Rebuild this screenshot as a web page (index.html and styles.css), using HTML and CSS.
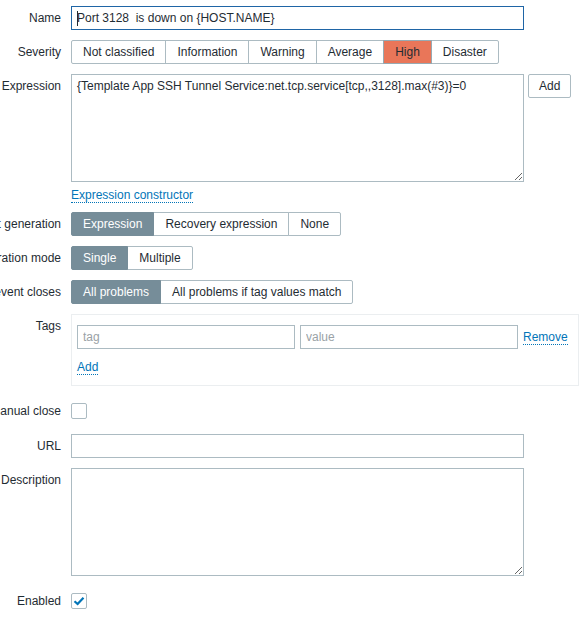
FILE: index.html
```html
<!DOCTYPE html>
<html lang="en">
<head>
<meta charset="utf-8">
<title>Trigger</title>
<link rel="stylesheet" href="styles.css">
</head>
<body>
<form class="form">
  <div class="row">
    <label class="label" for="name">Name</label>
    <div class="field">
      <span class="input-wrap">
        <input id="name" class="input input-focus" type="text" value="Port 3128  is down on {HOST.NAME}">
        <span class="caret"></span>
      </span>
    </div>
  </div>

  <div class="row">
    <div class="label">Severity</div>
    <div class="field">
      <div class="radio-list">
        <span class="radio">Not classified</span>
        <span class="radio">Information</span>
        <span class="radio">Warning</span>
        <span class="radio">Average</span>
        <span class="radio radio-high">High</span>
        <span class="radio">Disaster</span>
      </div>
    </div>
  </div>

  <div class="row">
    <label class="label" for="expr">Expression</label>
    <div class="field">
      <div class="expr-line">
        <textarea id="expr" class="textarea">{Template App SSH Tunnel Service:net.tcp.service[tcp,,3128].max(#3)}=0</textarea>
        <button type="button" class="btn-alt">Add</button>
      </div>
      <div class="link-line"><a class="link" href="#">Expression constructor</a></div>
    </div>
  </div>

  <div class="row">
    <div class="label">OK event generation</div>
    <div class="field">
      <div class="radio-list">
        <span class="radio radio-on">Expression</span>
        <span class="radio">Recovery expression</span>
        <span class="radio">None</span>
      </div>
    </div>
  </div>

  <div class="row">
    <div class="label">PROBLEM event generation mode</div>
    <div class="field">
      <div class="radio-list">
        <span class="radio radio-on">Single</span>
        <span class="radio">Multiple</span>
      </div>
    </div>
  </div>

  <div class="row">
    <div class="label">OK event closes</div>
    <div class="field">
      <div class="radio-list">
        <span class="radio radio-on">All problems</span>
        <span class="radio">All problems if tag values match</span>
      </div>
    </div>
  </div>

  <div class="row">
    <div class="label">Tags</div>
    <div class="field">
      <div class="tags-box">
        <div class="tag-line">
          <input class="input input-tag" type="text" placeholder="tag">
          <input class="input input-tag" type="text" placeholder="value">
          <a class="link" href="#">Remove</a>
        </div>
        <div class="tag-add"><a class="link" href="#">Add</a></div>
      </div>
    </div>
  </div>

  <div class="row row-check">
    <div class="label">Allow manual close</div>
    <div class="field">
      <span class="checkbox"></span>
    </div>
  </div>

  <div class="row">
    <label class="label" for="url">URL</label>
    <div class="field">
      <input id="url" class="input" type="text">
    </div>
  </div>

  <div class="row">
    <label class="label" for="desc">Description</label>
    <div class="field">
      <textarea id="desc" class="textarea textarea-solo"></textarea>
    </div>
  </div>

  <div class="row row-check">
    <div class="label">Enabled</div>
    <div class="field">
      <span class="checkbox">
        <svg width="12" height="10" viewBox="0 0 12 10" aria-hidden="true">
          <path d="M1.5 5.2 L4.6 8 L10.5 1.8" fill="none" stroke="#0275b8" stroke-width="2.2"/>
        </svg>
      </span>
    </div>
  </div>
</form>
</body>
</html>
```

FILE: styles.css
```css
html, body {
  margin: 0;
  padding: 0;
  background: #fff;
}

body {
  font-family: "Liberation Sans", Arial, sans-serif;
  font-size: 12px;
  line-height: 14px;
  color: #1f2c33;
  padding-top: 6px;
  overflow: hidden;
}

.form {
  display: flex;
  flex-direction: column;
}

.row {
  display: flex;
  align-items: flex-start;
  margin-bottom: 10px;
}

.row-check {
  padding: 3px 0 1px;
}

.label {
  flex: 0 0 61px;
  width: 61px;
  display: flex;
  justify-content: flex-end;
  white-space: nowrap;
  line-height: 24px;
  margin-right: 10px;
}

.field {
  flex: 0 0 auto;
}

/* text inputs */
.input-wrap {
  position: relative;
  display: block;
}

.caret {
  position: absolute;
  left: 6px;
  top: 5px;
  width: 1px;
  height: 15px;
  background: #1f2c33;
}

.input {
  display: block;
  box-sizing: border-box;
  width: 453px;
  height: 24px;
  margin: 0;
  padding: 0 5px;
  border: 1px solid #acbbc2;
  border-radius: 0;
  background: #fff;
  font: inherit;
  color: #1f2c33;
  outline: none;
}

.input::placeholder {
  color: #9aa2a6;
}

.input-focus {
  border-color: #1f65a6;
}

/* segmented radio buttons */
.radio-list {
  display: flex;
}

.radio {
  display: block;
  height: 24px;
  box-sizing: border-box;
  padding: 0 11px;
  line-height: 22px;
  border: 1px solid #acbbc2;
  background: #fff;
  color: #1f2c33;
  white-space: nowrap;
}

.radio + .radio {
  margin-left: -1px;
}

.radio:first-child {
  border-radius: 2px 0 0 2px;
}

.radio:last-child {
  border-radius: 0 2px 2px 0;
}

.radio-on {
  background: #768d99;
  border-color: #768d99;
  color: #fff;
  position: relative;
}

.radio-high {
  background: #e97659;
  border-color: #97aab3;
  color: #1f2c33;
  position: relative;
}

/* expression */
.expr-line {
  display: flex;
  align-items: flex-start;
  gap: 4px;
}

.textarea {
  display: block;
  box-sizing: border-box;
  width: 453px;
  height: 108px;
  margin: 0;
  padding: 4px 5px;
  border: 1px solid #acbbc2;
  border-radius: 0;
  font: inherit;
  line-height: 14px;
  color: #1f2c33;
  background: #fff;
  outline: none;
}

.btn-alt {
  box-sizing: border-box;
  height: 24px;
  margin: 0;
  padding: 0 10px;
  border: 1px solid #acbbc2;
  border-radius: 2px;
  background: #fff;
  font: inherit;
  color: #1f2c33;
}

.link-line {
  margin-top: 6px;
  line-height: 14px;
}

.link {
  color: #0275b8;
  text-decoration: none;
  border-bottom: 1px dotted #0275b8;
}

/* tags */
.tags-box {
  box-sizing: border-box;
  width: 508px;
  height: 72px;
  padding: 10px 5px 0;
  border: 1px solid #ebeef0;
}

.tag-line {
  display: flex;
  align-items: center;
  gap: 5px;
}

.input-tag {
  width: 218px;
}

.tag-add {
  margin-top: 11px;
  line-height: 14px;
}

/* checkboxes */
.checkbox {
  display: flex;
  align-items: center;
  justify-content: center;
  box-sizing: border-box;
  width: 16px;
  height: 16px;
  margin-top: 4px;
  border: 1px solid #acbbc2;
  border-radius: 2px;
  background: #fff;
}
```
